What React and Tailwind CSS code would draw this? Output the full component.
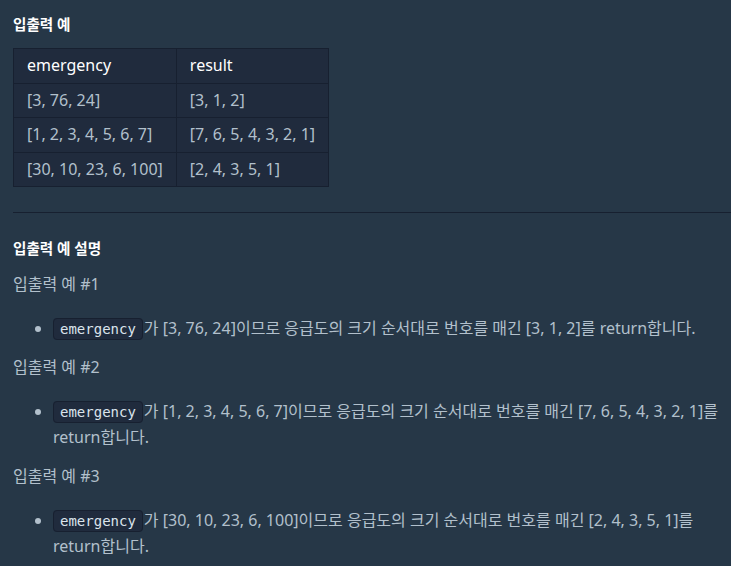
import React from 'react';

const rows = [
  ['[3, 76, 24]', '[3, 1, 2]'],
  ['[1, 2, 3, 4, 5, 6, 7]', '[7, 6, 5, 4, 3, 2, 1]'],
  ['[30, 10, 23, 6, 100]', '[2, 4, 3, 5, 1]'],
];

const examples = [
  { title: '입출력 예 #1', input: '[3, 76, 24]', output: '[3, 1, 2]' },
  { title: '입출력 예 #2', input: '[1, 2, 3, 4, 5, 6, 7]', output: '[7, 6, 5, 4, 3, 2, 1]' },
  { title: '입출력 예 #3', input: '[30, 10, 23, 6, 100]', output: '[2, 4, 3, 5, 1]' },
];

const Code = ({ children }) => (
  <code className="mr-[1px] rounded-[4px] border border-[#172030] bg-[#202b3d] px-[6px] py-[2px] font-['DejaVu_Sans_Mono',monospace] text-[14px] text-[#dbe4ec]">
    {children}
  </code>
);

export default function App() {
  return (
    <div className="min-h-[566px] bg-[#263747] pl-[13px] pt-[13px] font-['Noto_Sans','Noto_Sans_CJK_KR',sans-serif] text-[16px] leading-[1.6] text-[#b2c0cc]">
      <h5 className="text-[14.6px] font-bold leading-[1.6] text-white">입출력 예</h5>

      <table className="mt-[12px] border-collapse bg-[#202b3d] leading-[23.5px]">
        <thead>
          <tr>
            <th className="w-[162px] whitespace-nowrap border border-[#172030] px-[13px] py-[5px] text-left font-normal text-white">emergency</th>
            <th className="w-[148px] whitespace-nowrap border border-[#172030] px-[13px] py-[5px] text-left font-normal text-white">result</th>
          </tr>
        </thead>
        <tbody>
          {rows.map((r, i) => (
            <tr key={i}>
              <td className="whitespace-nowrap border border-[#172030] px-[13px] py-[5px]">{r[0]}</td>
              <td className="whitespace-nowrap border border-[#172030] px-[13px] py-[5px]">{r[1]}</td>
            </tr>
          ))}
        </tbody>
      </table>

      <hr className="mt-[25px] border-t border-[#172030]" />

      <h5 className="mt-[24px] text-[14.6px] font-bold leading-[1.6] text-white">입출력 예 설명</h5>

      {examples.map((ex, i) => (
        <div key={ex.title}>
          <p className={i === 0 ? 'mt-[11px]' : 'mt-[13px]'}>{ex.title}</p>
          <ul className="mt-[19px] list-disc pl-[40px] marker:text-[#b2c0cc]">
            <li>
              <Code>emergency</Code>가 {ex.input}이므로 응급도의 크기 순서대로 번호를 매긴 {ex.output}를 return합니다.
            </li>
          </ul>
        </div>
      ))}
    </div>
  );
}
